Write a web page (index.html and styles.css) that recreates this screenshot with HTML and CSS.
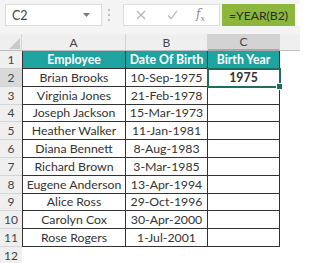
FILE: index.html
```html
<!DOCTYPE html>
<html>
<head>
<meta charset="utf-8">
<link rel="stylesheet" href="styles.css">
</head>
<body>
<div class="app">
  <div class="toolbar">
    <div class="namebox">
      <span class="ref">C2</span>
      <svg class="arrow" width="7" height="4" viewBox="0 0 7 4"><path d="M0 0H7L3.5 4Z" fill="#7a7a7a"/></svg>
    </div>
    <div class="grip"><i></i><i></i><i></i></div>
    <div class="fxbox">
      <svg class="ico" width="10" height="10" viewBox="0 0 10 10"><path d="M1 1L9 9M9 1L1 9" stroke="#b4b4b4" stroke-width="1.2" fill="none"/></svg>
      <svg class="ico" width="11" height="10" viewBox="0 0 11 10"><path d="M1 5.5L4 8.5L10 1" stroke="#b4b4b4" stroke-width="1.2" fill="none"/></svg>
      <span class="fx">f<sub>x</sub></span>
    </div>
    <div class="input"><span class="formula">=YEAR(B2)</span></div>
  </div>
  <div class="sheet">
    <div class="corner"><svg width="11" height="11" viewBox="0 0 11 11"><path d="M11 0V11H0Z" fill="#c9c9c9"/></svg></div>
    <div class="colh">A</div>
    <div class="colh">B</div>
    <div class="colh sel">C</div>
    <div class="colh rest"></div>

    <div class="rowh">1</div>
    <div class="c a head">Employee</div>
    <div class="c head">Date Of Birth</div>
    <div class="c head">Birth Year</div>
    <div class="blank"></div>

    <div class="rowh sel">2</div>
    <div class="c a">Brian Brooks</div>
    <div class="c">10-Sep-1975</div>
    <div class="c active"><b>1975</b></div>
    <div class="blank"></div>

    <div class="rowh">3</div>
    <div class="c a">Virginia Jones</div>
    <div class="c">21-Feb-1978</div>
    <div class="c"></div>
    <div class="blank"></div>

    <div class="rowh">4</div>
    <div class="c a">Joseph Jackson</div>
    <div class="c">15-Mar-1973</div>
    <div class="c"></div>
    <div class="blank"></div>

    <div class="rowh">5</div>
    <div class="c a">Heather Walker</div>
    <div class="c">11-Jan-1981</div>
    <div class="c"></div>
    <div class="blank"></div>

    <div class="rowh">6</div>
    <div class="c a">Diana Bennett</div>
    <div class="c">8-Aug-1983</div>
    <div class="c"></div>
    <div class="blank"></div>

    <div class="rowh">7</div>
    <div class="c a">Richard Brown</div>
    <div class="c">3-Mar-1985</div>
    <div class="c"></div>
    <div class="blank"></div>

    <div class="rowh">8</div>
    <div class="c a">Eugene Anderson</div>
    <div class="c">13-Apr-1994</div>
    <div class="c"></div>
    <div class="blank"></div>

    <div class="rowh">9</div>
    <div class="c a">Alice Ross</div>
    <div class="c">29-Oct-1996</div>
    <div class="c"></div>
    <div class="blank"></div>

    <div class="rowh">10</div>
    <div class="c a">Carolyn Cox</div>
    <div class="c">30-Apr-2000</div>
    <div class="c"></div>
    <div class="blank"></div>

    <div class="rowh">11</div>
    <div class="c a">Rose Rogers</div>
    <div class="c">1-Jul-2001</div>
    <div class="c"></div>
    <div class="blank"></div>

    <div class="rowh last">12</div>
    <div class="blank"></div>
    <div class="blank"></div>
    <div class="blank"></div>
    <div class="blank"></div>
  </div>
</div>
</body>
</html>
```
FILE: styles.css
```css
* { box-sizing: border-box; }
html, body { margin: 0; padding: 0; }
body {
  width: 300px;
  height: 263px;
  overflow: hidden;
  background: #ffffff;
  font-family: Lato, "Open Sans", sans-serif;
  color: #333;
}
.app { display: flex; flex-direction: column; height: 263px; }

.toolbar {
  display: flex;
  align-items: flex-start;
  height: 34px;
  padding-top: 4px;
  background: #f4f4f4;
}
.namebox {
  width: 97px;
  height: 22px;
  margin-left: 5px;
  background: #fff;
  border: 1px solid #dcdcdc;
  display: flex;
  align-items: center;
  justify-content: space-between;
  padding: 0 11px 0 6px;
  font-size: 12.5px;
  color: #444;
}
.arrow { display: block; }
.grip {
  width: 21px;
  height: 22px;
  display: flex;
  flex-direction: column;
  align-items: flex-start;
  justify-content: center;
  gap: 3px;
  padding-left: 6px;
}
.grip i {
  display: block;
  width: 2px;
  height: 2px;
  background: #bdbdbd;
}
.fxbox {
  width: 97px;
  height: 22px;
  background: #fff;
  border: 1px solid #dcdcdc;
  display: flex;
  align-items: center;
  padding-left: 12px;
  gap: 21px;
}
.ico { display: block; }
.fx {
  font-family: "DejaVu Serif", "Liberation Serif", serif;
  font-style: italic;
  font-size: 12px;
  color: #8a8a8a;
  margin-left: -3px;
}
.fx sub { font-size: 8px; }
.input {
  flex: 1;
  height: 22px;
  margin-left: 2px;
  background: #fff;
  display: flex;
}
.formula {
  width: 73px;
  height: 22px;
  background: #8cb73c;
  color: #2a2a2a;
  font-size: 12.2px;
  display: flex;
  align-items: center;
  justify-content: center;
  white-space: nowrap;
}

.sheet {
  display: grid;
  grid-template-columns: 22px 104px 82px 72px 1fr;
  grid-template-rows: 17px 18px repeat(10, 17.8px) 1fr;
  flex: 1;
  font-size: 12.3px;
}
.corner {
  background: #efefef;
  border-right: 1px solid #d4d4d4;
  border-bottom: 1px solid #bdbdbd;
  display: flex;
  align-items: flex-end;
  justify-content: flex-end;
  padding: 0 1px 1px 0;
}
.corner svg { display: block; }
.colh {
  background: #efefef;
  border-right: 1px solid #d4d4d4;
  border-bottom: 1px solid #bdbdbd;
  color: #444;
  font-size: 12px;
  display: flex;
  align-items: center;
  justify-content: center;
}
.colh.sel { background: #d3d3d3; border-bottom: 2px solid #a8a8a8; }
.colh.rest { border-right: none; }
.rowh {
  background: #efefef;
  border-bottom: 1px solid #d4d4d4;
  color: #444;
  font-size: 12px;
  display: flex;
  align-items: center;
  justify-content: center;
}
.rowh.sel { background: #d9d9d9; }
.rowh.last { border-bottom: none; align-items: flex-start; padding-top: 1px; }
.c {
  border-right: 1px solid #333;
  border-bottom: 1px solid #333;
  display: flex;
  align-items: center;
  justify-content: center;
  white-space: nowrap;
  color: #333;
}
.c.a { border-left: 1px solid #333; }
.c.head {
  background: #1fa3a1;
  color: #fff;
  font-weight: bold;
}
.c.active {
  position: relative;
  outline: 2px solid #1e6e5c;
  outline-offset: -1px;
}
.c.active::after {
  content: "";
  position: absolute;
  right: -4px;
  bottom: -4px;
  width: 5px;
  height: 5px;
  background: #1e6e5c;
  border: 1px solid #fff;
}
.c.active b { font-weight: bold; }
.blank { background: #fff; }
```
